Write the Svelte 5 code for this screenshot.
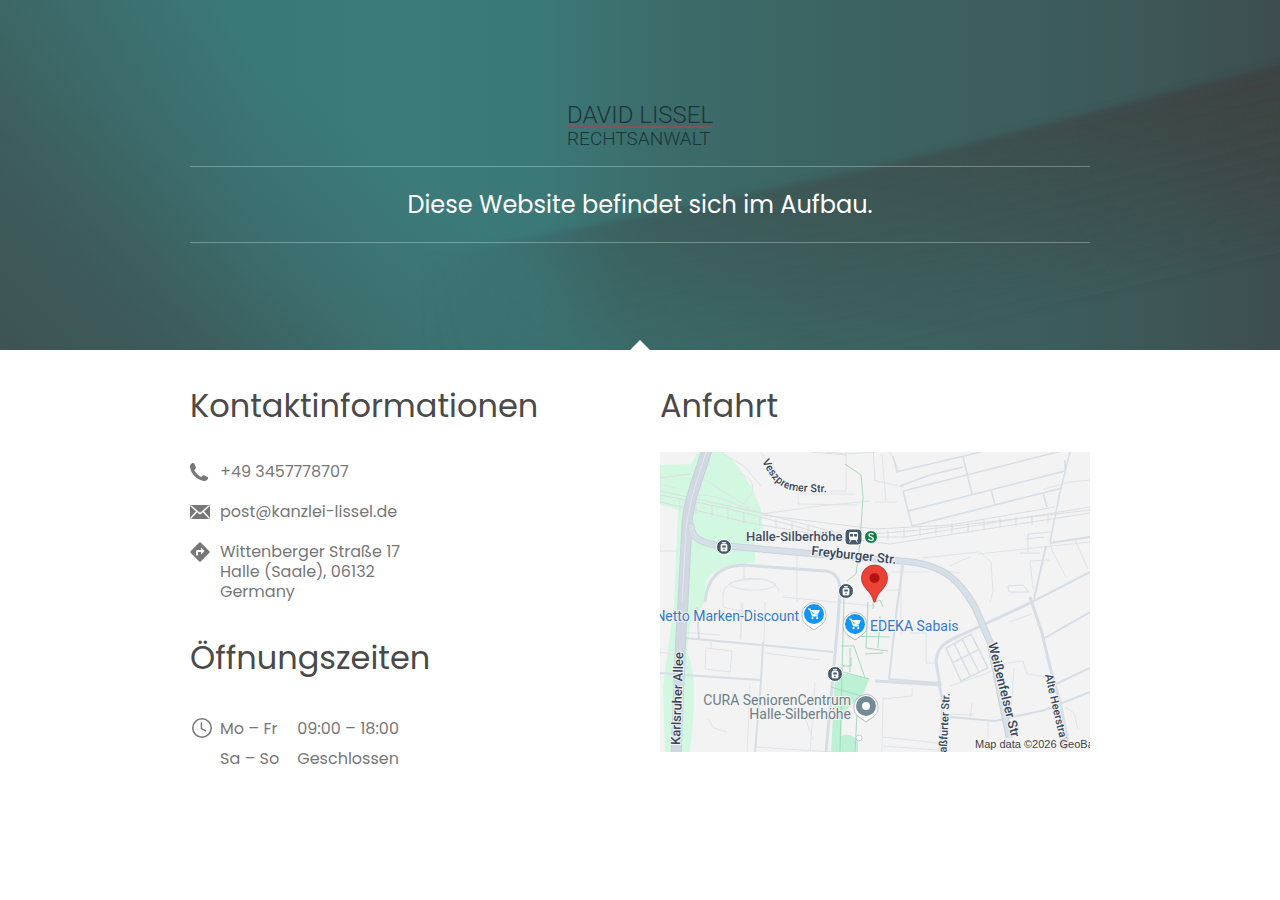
<script>
  const phone = "+49 3457778707";
  const email = "post@kanzlei-lissel.de";
  const address = ["Wittenberger Straße 17", "Halle (Saale), 06132", "Germany"];

  const hours = [
    { days: "Mo – Fr", time: "09:00 – 18:00" },
    { days: "Sa – So", time: "Geschlossen" },
  ];

  // sleepers of the railway line
  const sleepers = Array.from({ length: 24 }, (_, i) => {
    const x = 20 + i * 16;
    const y = x < 190 ? 48 + x * 0.2 : 86 - (x - 190) * 0.105;
    return { x, y };
  });

  const tramStops = [
    { x: 64, y: 95 },
    { x: 186, y: 139 },
    { x: 175, y: 222 },
  ];

  const shops = [
    { x: 154, y: 163 },
    { x: 195, y: 173 },
  ];
</script>

<header class="hero">
  <svg class="hero-bg" viewBox="0 0 1280 350" preserveAspectRatio="none" aria-hidden="true">
    <defs>
      <linearGradient id="base" x1="0" x2="1" y1="0" y2="0">
        <stop offset="0" stop-color="#3c6e6d" />
        <stop offset="0.1" stop-color="#3b7473" />
        <stop offset="0.2" stop-color="#3b7979" />
        <stop offset="0.3" stop-color="#3c7b7a" />
        <stop offset="0.42" stop-color="#3b7978" />
        <stop offset="0.5" stop-color="#3b6e6c" />
        <stop offset="0.64" stop-color="#3c6462" />
        <stop offset="0.8" stop-color="#3c5e5d" />
        <stop offset="0.9" stop-color="#3d5757" />
        <stop offset="1" stop-color="#3e4d4f" />
      </linearGradient>
      <linearGradient id="corner" gradientUnits="userSpaceOnUse" x1="0" y1="350" x2="260" y2="50">
        <stop offset="0" stop-color="#3e5454" />
        <stop offset="0.3" stop-color="#3e5454" stop-opacity="0.8" />
        <stop offset="0.65" stop-color="#3e5454" stop-opacity="0.3" />
        <stop offset="1" stop-color="#3e5454" stop-opacity="0" />
      </linearGradient>
      <linearGradient id="wedge" gradientUnits="userSpaceOnUse" x1="880" y1="166" x2="920" y2="341">
        <stop offset="0" stop-color="#3e4242" />
        <stop offset="0.4" stop-color="#3e4242" stop-opacity="0.65" />
        <stop offset="1" stop-color="#3e4242" stop-opacity="0" />
      </linearGradient>
      <linearGradient id="spread" gradientUnits="userSpaceOnUse" x1="420" y1="0" x2="1280" y2="0">
        <stop offset="0" stop-color="#fff" stop-opacity="0" />
        <stop offset="0.24" stop-color="#fff" stop-opacity="0.32" />
        <stop offset="0.6" stop-color="#fff" stop-opacity="0.46" />
        <stop offset="0.85" stop-color="#fff" stop-opacity="0.7" />
        <stop offset="1" stop-color="#fff" stop-opacity="0.95" />
      </linearGradient>
      <mask id="spread-mask" maskUnits="userSpaceOnUse" x="0" y="0" width="1280" height="350">
        <rect width="1280" height="350" fill="url(#spread)" />
      </mask>
      <filter id="soft" x="-10%" y="-20%" width="120%" height="140%">
        <feGaussianBlur stdDeviation="3" />
      </filter>
    </defs>
    <rect width="1280" height="350" fill="url(#base)" />
    <rect width="1280" height="350" fill="url(#corner)" />
    <g mask="url(#spread-mask)">
      <path d="M1320 54 880 166 640 216 400 262V450H1320Z" fill="url(#wedge)" filter="url(#soft)" />
    </g>
  </svg>

  <div class="hero-content">
    <svg class="logo" width="148" height="44" viewBox="0 0 148 44" role="img" aria-label="David Lissel Rechtsanwalt">
      <text x="1" y="18" font-size="24">DAVID LISSEL</text>
      <rect x="2" y="21" width="144" height="2" />
      <text x="1" y="40" font-size="19">RECHTSANWALT</text>
    </svg>
    <h1>Diese Website befindet sich im Aufbau.</h1>
  </div>
</header>

<main class="content">
  <div class="column">
    <section>
      <h2>Kontaktinformationen</h2>
      <ul class="contact">
        <li>
          <svg class="icon" width="20" height="20" viewBox="0 0 20 20" aria-hidden="true">
            <path
              d="M2.800 1 4.200 1.300 6 5.400 5.700 6.500 4.200 8C5.600 11 8.200 13.600 11.200 14.900L12.900 13.400 14 13.200 17.800 15 18.200 16.200C17.400 18 16.200 18.900 14.300 18.900 7.500 18.500.4 11.500 0 4.500 0 2.700 1 1.500 2.800 1Z"
            />
          </svg>
          <a href="tel:+493457778707">{phone}</a>
        </li>
        <li>
          <svg class="icon" width="20" height="20" viewBox="0 0 20 20" aria-hidden="true">
            <path d="M0 3H20V17H0Z" />
            <path
              d="M.5 3.500 10 11.800 19.500 3.500M.5 16.500 7 9.300M19.500 16.500 13 9.300"
              fill="none"
              stroke="#fff"
              stroke-width="1.5"
            />
          </svg>
          <a href="mailto:post@kanzlei-lissel.de">{email}</a>
        </li>
        <li>
          <svg class="icon" width="20" height="20" viewBox="0 0 20 20" aria-hidden="true">
            <path d="M9.300.6Q10 0 10.700.6L19.400 9.300Q20 10 19.400 10.700L10.700 19.400Q10 20 9.300 19.400L.6 10.700Q0 10 .6 9.300Z" />
            <path d="M6 13.500V9.200Q6 8 7.200 8H11V5.500L14.500 9 11 12.500V10H8V13.500Z" fill="#fff" />
          </svg>
          <address>
            {#each address as line}
              <span>{line}</span>
            {/each}
          </address>
        </li>
      </ul>
    </section>

    <section>
      <h2>Öffnungszeiten</h2>
      <div class="hours">
        <svg class="icon" width="24" height="26" viewBox="0 0 24 26" aria-hidden="true">
          <circle cx="12" cy="14" r="9.2" fill="none" stroke="#777" stroke-width="1.6" />
          <path d="M11.400 8.500V14.600L16 17.200" fill="none" stroke="#777" stroke-width="1.4" />
        </svg>
        <table>
          <tbody>
            {#each hours as row}
              <tr>
                <th scope="row">{row.days}</th>
                <td>{row.time}</td>
              </tr>
            {/each}
          </tbody>
        </table>
      </div>
    </section>
  </div>

  <section class="column">
    <h2>Anfahrt</h2>
    <svg class="map" viewBox="0 0 430 300" preserveAspectRatio="xMidYMid slice" role="img" aria-label="Karte">
      <rect width="430" height="300" fill="#f3f3f4" />

      <!-- parks -->
      <g fill="#d3f8e2">
        <path d="M0 13 31 12 37 0H63C76 10 84 22 93 39L101 57 103 76 95 90V111C73 110 55 115 45 130V150L30 172 27 200C38 225 34 262 30 300H5L3 235 14 150 18 58 0 52Z" />
        <path d="M175 222 187 222 209 227 203 243 192 252 182 262 181 300H171L174 245ZM181 284Q192 280 198 290V300H181Z" fill="#bdf1d5" />
      </g>

      <!-- paths -->
      <g fill="none" stroke="#e0e3e7" stroke-width="1">
        <path d="M0 32 15 36M0 99H18M0 200 18 203M37 23 90 56M60 0 84 14 101 34M76 22C88 22 96 30 91 43L76 60M38 43C60 42 81 57 101 60" />
        <path d="M101 1 110 12M138 42H195M138 42V52L197 53M101 62 160 54 210 49M186 0V39H170M213 28 244 35M215 50H237M222 3 226 50M230 0 240 20" />
        <path d="M84 111V128M63 142C65 121 118 122 119 140M69 132C79 126 108 125 116 132C114 139 77 141 69 132ZM81 150V188M63 140 63 155 99 163M137 103V150M123 145 215 154" />
        <path d="M46 196 72 199 70 220 45 217ZM51 190V196M105 201 160 208M83 151 80 187M105 150 104 190M20 180 60 183M90 234 87 300M155 231 150 300M97 295 171 300M48 267 54 276 67 280M145 265 153 288" />
        <path d="M262 106 319 100M235 110 300 121M230 120H270M320 100 331 110 333 140 330 150M290 114 303 108 311 105M318 102 430 90M226 138H240M241 113V183M250 181H266V211H276" />
        <path d="M290 234 325 222 346 211 363 209 367 222 385 225M349 170 372 162M384 37 410 30 430 28M390 90 392 98 406 125M415 88 428 117M354 216 351 260M328 268V300M287 262 313 263M312 251 310 266M223 294 290 299M223 285 287 292M223 245 222 300M223 247 252 244V236M390 108 370 109 373 137M405 255 414 261 418 277" />
      </g>

      <!-- railway -->
      <g fill="none" stroke="#dadddf" stroke-width="1">
        <path d="M0 39 101 61 190 84 260 78 430 58M0 50 90 71 160 83 230 92 320 78 430 61M0 43 70 57 180 86M215 85H245L430 55" />
        <path d="M0 26 30 22M102 63 215 77 290 73 395 55" />
        {#each sleepers as s}
          <path d="M{s.x} {s.y - 4}V{s.y + 6}" />
        {/each}
      </g>

      <!-- side streets -->
      <g fill="none" stroke="#d6dee6" stroke-width="1">
        <path d="M236 20 321 0M233 4 237 20M240 34 270 23 303 15M243 39 303 24 405 -2M248 59 405 19M252 74 402 36M243 39 252 74M303 5 312 42M331 38 335 52M383 41 387 55M405 8V19M410 0 400 40 390 90" stroke-width="1.5" />
        <path d="M368 82 391 80M368 82V100M360 101H380M348 134 363 133 369 140 349 140ZM365 87 384 85" />
        <path d="M286 196 301 229 328 216 311 182ZM294 191 310 224M302 187 319 220M292 211 320 197" stroke-width="1.5" />
        <path d="M165 0 186 2 215 0M150 0 186 3M213 -5 215 28" stroke="#dde1e6" />
      </g>
      <g fill="none" stroke="#d6dde5" stroke-width="3">
        <path d="M45 150C47 125 60 114 82 113L165 119C176 120 180 127 180 139L178 170 166 300" />
        <path d="M25 186 101 193 173 200M37 155 39 187M103 190 101 229 95 300M0 221 25 223 100 228M243 113 237 155 229 227 278 231" stroke-width="2" />
        <path d="M215 229 280 233 276 210C277 195 285 190 299 184L323 173 370 151M370 145 382 181 390 215 400 250 410 300M278 229 283 249 280 300" />
        <path d="M290 265 335 269 385 258 430 240M370 151 430 120M386 94 374 147M390 91 430 85M396 232 430 216M383 187 430 160" stroke-width="2" />
      </g>

      <!-- footpaths -->
      <g fill="none" stroke="#a5d9bd" stroke-width="1">
        <path d="M185 12 201 23 203 45 200 90 196 122 187 129M184 145 180 300M208 150 206 196 228 199M213 157V151L220 148 223 155M187 184 230 185M181 194H194L205 226M171 235 205 245M190 196V220M183 220 209 227M182 214H191V205M220 164 218 196M223 201 205 202M197 262 195 300" />
      </g>

      <!-- main roads -->
      <g fill="none" stroke-linecap="round">
        <path d="M48 -5C38 27 29 46 27 71L23 150 21 180 16 305" stroke="#c7d1da" stroke-width="11" />
        <path d="M48 -5C38 27 29 46 27 71L23 150 21 180 16 305" stroke="#d2d8e2" stroke-width="9" />
        <path d="M31 74C32 86 40 90 55 93L145 101 240 109C287 111 302 133 315 155L330 190 352 300" stroke="#c9d3dc" stroke-width="7" />
        <path d="M31 74C32 86 40 90 55 93L145 101 240 109C287 111 302 133 315 155L330 190 352 300" stroke="#d7dfe7" stroke-width="5" />
        <path d="M46 0C35 35 29 50 26 80L22 150" stroke="#e3e7ed" stroke-width="1" />
      </g>

      <!-- street names -->
      <defs>
        <path id="veszpremer" d="M102 9C110 26 120 38 138 39Q155 41 176 40" />
      </defs>
      <g class="street">
        <text font-size="11"><textPath href="#veszpremer">Veszpremer Str.</textPath></text>
        <text font-size="13" transform="translate(151 103) rotate(6)">Freyburger Str.</text>
        <text font-size="13" transform="translate(20 293) rotate(-88)">Karlsruher Allee</text>
        <text font-size="13" transform="translate(328 192) rotate(76)">Weißenfelser Str</text>
        <text font-size="11" transform="translate(385 223) rotate(77)">Alte Heerstraße</text>
        <text font-size="11" transform="translate(286 311) rotate(-87)">Staßfurter Str.</text>
      </g>

      <!-- places -->
      <g class="place">
        <text class="station" x="86" y="89">Halle-Silberhöhe</text>
        <text x="139" y="169" text-anchor="end" fill="#3679c8">Netto Marken-Discount</text>
        <text x="210" y="179" fill="#3679c8">EDEKA Sabais</text>
        <text x="191" y="253" text-anchor="end" fill="#6b7d88">CURA SeniorenCentrum</text>
        <text x="191" y="267" text-anchor="end" fill="#6b7d88">Halle-Silberhöhe</text>
      </g>

      <!-- station -->
      <rect x="185" y="77" width="17" height="16" rx="4" fill="#465a6b" stroke="#fff" />
      <rect x="189" y="80" width="9" height="8" rx="1.5" fill="#fff" />
      <path d="M190 82H193V84.500H190ZM194 82H197V84.500H194Z" fill="#465a6b" />
      <path d="M191 88 189.500 90.500M196 88 197.500 90.500" stroke="#fff" />
      <circle cx="211" cy="85" r="6.5" fill="#0b8043" stroke="#fff" />
      <path d="M213.500 82.500C211 80.500 208.500 82 209 83.500S213.500 85 213.300 87 210 89 208.300 87" fill="none" stroke="#fff" stroke-width="1.4" />

      {#each tramStops as stop}
        <g transform="translate({stop.x} {stop.y})">
          <circle r="7.5" fill="#465a6b" stroke="#fff" />
          <path d="M-2-4.500H2M0-4.500V-3M-3-1.500Q-3-3-1.500-3H1.500Q3-3 3-1.500V3Q3 4 2 4H-2Q-3 4-3 3Z" fill="#fff" stroke="#fff" stroke-width="0.8" />
          <path d="M-1.800-1.500H1.800V.5H-1.800Z" fill="#465a6b" />
          <circle cy="2.2" r="0.8" fill="#465a6b" />
        </g>
      {/each}

      {#each shops as shop}
        <g transform="translate({shop.x} {shop.y})">
          <path d="M0 15-7 10C-11 7-12 4-12-.5A12 12 0 0 1 12-.5C12 4 11 7 7 10Z" fill="#fff" stroke="#a5acb4" stroke-width="0.8" />
          <circle cy="-1" r="10" fill="#1095f4" />
          <path d="M-6-6H-4L-1.500 1H4M-3.500-4.500H5L3.500-1H-2.500" fill="#fff" stroke="#fff" stroke-width="1.2" />
          <circle cx="-1.5" cy="3.2" r="1.1" fill="#fff" />
          <circle cx="3.2" cy="3.2" r="1.1" fill="#fff" />
        </g>
      {/each}

      <g transform="translate(206 255)">
        <path d="M0 15-7 10C-11 7-12 4-12-.5A12 12 0 0 1 12-.5C12 4 11 7 7 10Z" fill="#fff" stroke="#a5acb4" stroke-width="0.8" />
        <circle cy="-1" r="10" fill="#738b98" />
        <circle cy="-1" r="4" fill="#fff" />
      </g>
      <circle cx="199" cy="286" r="3" fill="#fff" stroke="#c3ccd4" />

      <!-- marker -->
      <path
        d="M214.500 150C213.500 150 213.300 148.500 212.700 146.500 210.500 139 201.500 135.500 201.500 126A13 13 0 0 1 227.500 126C227.500 135.500 218.500 139 216.300 146.500 215.700 148.500 215.500 150 214.500 150Z"
        fill="#ea4335"
        stroke="#c5221f"
        stroke-width="0.8"
      />
      <circle cx="214.5" cy="126" r="5" fill="#b31412" />

      <rect x="312" y="286" width="118" height="14" fill="#f5f5f5" fill-opacity="0.8" />
      <text class="credit" x="315" y="296">Map data ©2026 GeoBasis</text>
    </svg>
  </section>
</main>

<style>
  :global(body) {
    background: #fff;
    font-family: Poppins, Inter, sans-serif;
    color: #777;
  }

  .hero {
    position: relative;
    padding: 105px 20px 107px;
    background: #3c6463;
  }

  .hero::after {
    content: "";
    position: absolute;
    bottom: 0;
    left: 50%;
    margin-left: -10px;
    border: 10px solid transparent;
    border-top: 0;
    border-bottom-color: #fff;
  }

  .hero-bg {
    position: absolute;
    inset: 0;
    width: 100%;
    height: 100%;
  }

  .hero-content {
    position: relative;
    max-width: 900px;
    margin: 0 auto;
    text-align: center;
  }

  .logo {
    display: block;
    margin: 0 auto 17px;
    overflow: visible;
    font-family: Roboto, sans-serif;
    font-weight: 300;
    fill: #1d3437;
  }

  .logo rect {
    fill: #84544f;
  }

  h1 {
    margin: 0;
    padding: 20px 0 19px;
    border-top: 1px solid rgba(255, 255, 255, 0.3);
    border-bottom: 1px solid rgba(255, 255, 255, 0.3);
    font-size: 24px;
    font-weight: 400;
    line-height: 36px;
    color: #fff;
  }

  .content {
    display: grid;
    grid-template-columns: 1fr 1fr;
    gap: 40px;
    max-width: 900px;
    margin: 0 auto;
    padding: 36px 20px;
  }

  .column {
    min-width: 0;
  }

  h2 {
    margin: 0 0 26px;
    font-size: 32px;
    font-weight: 400;
    line-height: 40px;
    color: #4a4a4a;
  }

  .contact {
    display: flex;
    flex-direction: column;
    gap: 20px;
    margin: 0 0 36px;
    padding: 10px 0 0;
    list-style: none;
    font-size: 16px;
    line-height: 20px;
  }

  .contact li {
    display: flex;
    gap: 10px;
  }

  .icon {
    flex: none;
    fill: #777;
  }

  a {
    color: inherit;
    text-decoration: none;
  }

  address {
    font-style: normal;
  }

  address span {
    display: block;
  }

  .hours {
    display: flex;
    align-items: flex-start;
    gap: 6px;
    padding-top: 10px;
  }

  table {
    border-collapse: collapse;
    font-size: 16px;
    line-height: 30px;
  }

  th,
  td {
    padding: 0;
    font-weight: 400;
    text-align: left;
  }

  th {
    padding-right: 18px;
  }

  .map {
    display: block;
    width: 100%;
    height: 300px;
    font-family: Roboto, sans-serif;
  }

  .street text {
    fill: #34465a;
    font-weight: 500;
    stroke: #f5f5f5;
    stroke-width: 2px;
    paint-order: stroke;
  }

  .place text {
    font-size: 14px;
    stroke: #f5f5f5;
    stroke-width: 2px;
    paint-order: stroke;
  }

  .place .station {
    font-size: 13px;
    font-weight: 500;
    fill: #3d4f5f;
  }

  .credit {
    font-family: "Liberation Sans", Arial, sans-serif;
    font-size: 11px;
    fill: #444;
  }

  @media (max-width: 760px) {
    .content {
      grid-template-columns: 1fr;
    }
  }
</style>
